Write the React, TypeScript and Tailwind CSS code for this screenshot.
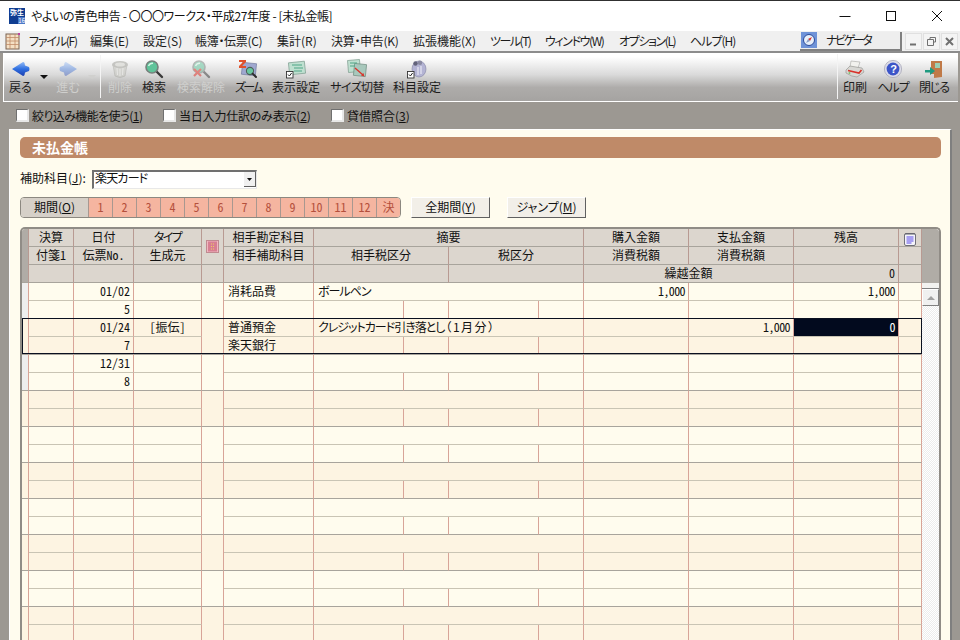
import React from 'react';

const gridCols = 'grid grid-cols-[7px_45px_60px_68px_22px_90px_90px_45px_90px_45px_105px_105px_105px_23px]';

const menus = [
  { label: 'ファイル(F)', w: 'w-[61px] tracking-[-1.2px]' },
  { label: '編集(E)', w: 'w-[53px]' },
  { label: '設定(S)', w: 'w-[52px]' },
  { label: '帳簿・伝票(C)', w: 'w-[82px] tracking-[-0.3px]' },
  { label: '集計(R)', w: 'w-[54px]' },
  { label: '決算・申告(K)', w: 'w-[82px] tracking-[-0.3px]' },
  { label: '拡張機能(X)', w: 'w-[77px]' },
  { label: 'ツール(T)', w: 'w-[55px] tracking-[-1.5px]' },
  { label: 'ウィンドウ(W)', w: 'w-[74px] tracking-[-1.4px]' },
  { label: 'オプション(L)', w: 'w-[71px] tracking-[-1.4px]' },
  { label: 'ヘルプ(H)', w: 'w-[70px] tracking-[-1px]' },
];

const ArrowIcon = ({ dir, pale }: { dir: 'l' | 'r'; pale?: boolean }) => (
  <svg width="20" height="20" viewBox="0 0 20 20" className={dir === 'r' ? '-scale-x-100' : ''} opacity={pale ? 0.38 : 1}>
    <defs>
      <linearGradient id="arrowBlue" x1="0" y1="0" x2="0" y2="1">
        <stop offset="0" stopColor="#8fb8f5" />
        <stop offset="0.5" stopColor="#2f6fe0" />
        <stop offset="1" stopColor="#1c3fb0" />
      </linearGradient>
    </defs>
    <path d="M1 10 L12 3 Q13 3 13.5 4 L14 6.5 L18 8 Q19 10 18 12 L14 13.5 L13.5 16 Q13 17 12 17 Z" fill="url(#arrowBlue)" />
  </svg>
);

const TrashIcon = () => (
  <svg width="20" height="20" viewBox="0 0 20 20" opacity="0.6">
    <path d="M3 6 L5 17 Q10 20 15 17 L17 6 Z" fill="#c9c9c3" stroke="#9a9a94" strokeWidth="0.6" />
    <ellipse cx="10" cy="5.5" rx="8" ry="3.6" fill="#a9a9a3" />
    <ellipse cx="10" cy="5.5" rx="5" ry="2" fill="#d8d8d2" />
    <path d="M7 9 L7.5 16 M10 10 L10 17 M13 9 L12.5 16" stroke="#eeeeea" strokeWidth="1" />
  </svg>
);

const LensIcon = ({ faded }: { faded?: boolean }) => (
  <svg width="20" height="20" viewBox="0 0 20 20" opacity={faded ? 0.5 : 1}>
    <path d="M12 12 L18 18" stroke="#3a3a3a" strokeWidth="2.4" strokeLinecap="round" />
    <circle cx="8" cy="8" r="6" fill="#5fc49a" stroke="#77807c" strokeWidth="1.6" />
    <path d="M4.5 7 Q6 4 9 4.2" stroke="#d8f5e6" strokeWidth="1.4" fill="none" />
    {faded && <path d="M3 10 L10 17 M10 10 L3 17" stroke="#e02a20" strokeWidth="2.2" />}
  </svg>
);

const ZoomIcon = () => (
  <svg width="20" height="20" viewBox="0 0 20 20">
    <rect x="4" y="4" width="14" height="12" fill="#9fa8d0" stroke="#6b7396" strokeWidth="0.6" transform="rotate(6 11 10)" />
    <path d="M1 1 H8 V3 L4 7 H8 V9 H1 V7 L5 3 H1 Z" fill="#e2502a" />
    <circle cx="12" cy="12" r="3.6" fill="#69c7a0" stroke="#50605a" strokeWidth="1.1" />
    <path d="M14.6 14.6 L18 18" stroke="#2e2e2e" strokeWidth="2" strokeLinecap="round" />
  </svg>
);

const CheckBadge = () => (
  <g>
    <rect x="0.5" y="12.5" width="6.5" height="6.5" fill="#fff" stroke="#333" strokeWidth="0.9" />
    <path d="M2 15.5 L3.4 17 L5.6 14" stroke="#222" strokeWidth="1" fill="none" />
  </g>
);

const DisplayIcon = () => (
  <svg width="20" height="20" viewBox="0 0 20 20">
    <rect x="3" y="3" width="16" height="12" fill="#bfe0d0" stroke="#7d9c8e" strokeWidth="0.7" transform="rotate(-6 11 9)" />
    <path d="M6 6 H16 M8 9 H17 M8 12 H16" stroke="#4fa586" strokeWidth="1.1" />
    <CheckBadge />
  </svg>
);

const SizeIcon = () => (
  <svg width="20" height="20" viewBox="0 0 20 20">
    <rect x="1" y="1" width="12" height="12" fill="#bfe0d0" stroke="#7d9c8e" strokeWidth="0.7" transform="rotate(-5 7 7)" />
    <rect x="7" y="5" width="12" height="12" fill="#a8c8bc" stroke="#6f8c80" strokeWidth="0.7" transform="rotate(6 13 11)" />
    <path d="M3 4 H10 M3 7 H8" stroke="#4fa586" strokeWidth="1" />
    <path d="M8 9 L16 16" stroke="#d8322a" strokeWidth="1.3" />
    <path d="M17.5 17.5 L14 16.4 L16.4 14 Z" fill="#d8322a" />
  </svg>
);

const AccountIcon = () => (
  <svg width="20" height="20" viewBox="0 0 20 20">
    <ellipse cx="12" cy="10" rx="7" ry="8" fill="#b4b4d4" stroke="#8484a4" strokeWidth="0.6" />
    <circle cx="8.5" cy="4.5" r="2.2" fill="#62627a" />
    <circle cx="13" cy="3.8" r="2.2" fill="#8a8aa2" />
    <path d="M11 8 V16 M14 7 V15" stroke="#e8e8f4" strokeWidth="1.2" />
    <CheckBadge />
  </svg>
);

const PrintIcon = () => (
  <svg width="20" height="20" viewBox="0 0 20 20">
    <path d="M6 2 L15 3 L13 9 L5 8 Z" fill="#f2f2ee" stroke="#a8a8a4" strokeWidth="0.6" />
    <path d="M1 11 L5 7 L17 9 L19 13 L12 18 Q7 18 1 14 Z" fill="#d8d8d4" stroke="#8e8e8a" strokeWidth="0.6" />
    <path d="M3 11.5 L14 14 L16.5 11" stroke="#d8322a" strokeWidth="1.6" fill="none" />
    <circle cx="4.5" cy="14" r="1" fill="#7fc46a" />
  </svg>
);

const HelpIcon = () => (
  <svg width="20" height="20" viewBox="0 0 20 20">
    <circle cx="10" cy="10" r="8.6" fill="#dcdce8" stroke="#a8a8b8" strokeWidth="0.8" />
    <circle cx="10" cy="10" r="6.4" fill="#3c55c8" />
    <text x="10" y="13.8" textAnchor="middle" fontSize="11" fontWeight="700" fill="#fff" fontFamily="Liberation Sans, sans-serif">?</text>
  </svg>
);

const DoorIcon = () => (
  <svg width="20" height="20" viewBox="0 0 20 20">
    <path d="M7 2 H18 V18 L10 19 V15 H7 Z" fill="#c07a48" />
    <path d="M11 4 H16 V9 H11 Z" fill="#9cd0b4" />
    <path d="M1 11 H6 V8 L11 12 L6 16 V13.5 H1 Z" fill="#1f9a80" />
  </svg>
);

const tools = [
  { label: '戻る', w: 'w-[33px]', icon: <ArrowIcon dir="l" /> },
  { caret: 'dark' },
  { label: '進む', w: 'w-[34px]', icon: <ArrowIcon dir="r" pale />, off: true },
  { caret: 'pale' },
  { sep: true },
  { label: '削除', w: 'w-[36px]', icon: <TrashIcon />, off: true },
  { label: '検索', w: 'w-[32px]', icon: <LensIcon /> },
  { label: '検索解除', w: 'w-[62px]', icon: <LensIcon faded />, off: true },
  { label: 'ズーム', w: 'w-[32px] tracking-[-2.5px]', icon: <ZoomIcon /> },
  { label: '表示設定', w: 'w-[64px]', icon: <DisplayIcon /> },
  { label: 'サイズ切替', w: 'w-[58px] tracking-[-0.6px]', icon: <SizeIcon /> },
  { label: '科目設定', w: 'w-[62px]', icon: <AccountIcon /> },
];

const rightTools = [
  { label: '印刷', w: 'w-[32px]', icon: <PrintIcon /> },
  { label: 'ヘルプ', w: 'w-[44px] tracking-[-1px]', icon: <HelpIcon /> },
  { label: '閉じる', w: 'w-[38px] tracking-[-1px]', icon: <DoorIcon /> },
];

const ToolButton = ({ label, w, icon, off }: any) => (
  <div className={`${w} flex flex-col items-center shrink-0`}>
    <div className="h-5 mt-[6px] flex items-center justify-center">{icon}</div>
    <span className={`h-[14px] mt-[1px] leading-[14px] whitespace-nowrap ${off ? 'text-[#cfcfcd]' : 'text-[#1c1c1c]'}`}>{label}</span>
  </div>
);

const TitleBar = () => (
  <div className="h-[31px] shrink-0 bg-white border-t border-[#303030] flex items-center">
    <div className="ml-[9px] w-4 h-4 bg-[#0f3d91] flex flex-col items-center justify-between text-white leading-none">
      <span className="text-[7px] leading-[8px] font-bold">弥生</span>
      <span className="text-[6px] leading-[7px] self-end bg-[#4a78c8]">16</span>
    </div>
    <span className="ml-[6px] flex-1 text-[#111] tracking-[-0.4px]">やよいの青色申告 - 〇〇〇ワークス・平成27年度 - [未払金帳]</span>
    <div className="w-[46px] flex justify-center">
      <svg width="12" height="12" viewBox="0 0 12 12"><path d="M0.5 6.5 H11.5" stroke="#111" /></svg>
    </div>
    <div className="w-[46px] flex justify-center">
      <svg width="12" height="12" viewBox="0 0 12 12"><rect x="1.5" y="1.5" width="9" height="9" fill="none" stroke="#111" /></svg>
    </div>
    <div className="w-[46px] flex justify-center">
      <svg width="12" height="12" viewBox="0 0 12 12"><path d="M1 1 L11 11 M11 1 L1 11" stroke="#111" /></svg>
    </div>
  </div>
);

const MdiButton = ({ children }: { children: React.ReactNode }) => (
  <div className="w-[17px] h-[17px] border border-[#e0e0e0] bg-[#f4f4f4] flex items-center justify-center">{children}</div>
);

const MenuBar = () => (
  <div className="h-5 shrink-0 bg-[#f0f0f0] flex items-center text-[#1c1c1c]">
    <svg width="16" height="17" viewBox="0 0 16 17" className="ml-[5px] mr-[8px] shrink-0">
      <rect x="1" y="1" width="13" height="15" fill="#f4dfc4" stroke="#7a6250" />
      <path d="M1 4.5 H14 M1 8 H14 M1 11.5 H14 M5 1 V16 M10 1 V16" stroke="#c08a68" strokeWidth="0.8" />
      <rect x="13" y="0" width="2" height="2" fill="#c040a0" />
    </svg>
    {menus.map(m => (
      <span key={m.label} className={`${m.w} shrink-0 whitespace-nowrap`}>{m.label}</span>
    ))}
    <div className="ml-auto flex items-center gap-[1px] pr-[2px] h-full">
      <div className="w-[102px] h-[19px] mr-[2px] bg-[#eeeeee] border-r-2 border-b-2 border-[#808080] flex items-center">
        <div className="w-4 h-4 ml-[1px] bg-[#6f93d8] flex items-center justify-center">
          <svg width="14" height="14" viewBox="0 0 14 14">
            <circle cx="7" cy="7" r="5.5" fill="#e8f0fa" stroke="#2a4a9a" />
            <path d="M10 4 L6 6 L8 8 Z" fill="#d8322a" />
            <path d="M4 10 L6 6 L8 8 Z" fill="#8aa0c8" />
          </svg>
        </div>
        <span className="ml-[9px] tracking-[-2.4px]">ナビゲータ</span>
      </div>
      <MdiButton><svg width="9" height="9" viewBox="0 0 9 9"><path d="M1 7.5 H7" stroke="#707070" strokeWidth="2" /></svg></MdiButton>
      <MdiButton><svg width="9" height="9" viewBox="0 0 9 9"><path d="M3 2 V0.5 H8.5 V5 H6.5 M0.5 2.5 H6.5 V8.5 H0.5 Z" fill="none" stroke="#707070" /></svg></MdiButton>
      <MdiButton><svg width="9" height="9" viewBox="0 0 9 9"><path d="M1 1 L8 8 M8 1 L1 8" stroke="#707070" strokeWidth="2" /></svg></MdiButton>
    </div>
  </div>
);

const Toolbar = () => (
  <div className="shrink-0 h-[51px] bg-[#9c9892] border-t-2 border-[#8c8c8c] pl-[3px] pr-[2px]">
    <div className="h-[49px] bg-[linear-gradient(#ffffff_8%,#dadada_45%,#aeacaa_72%,#a5a3a1)] border-l border-white border-b flex justify-between">
      <div className="flex">
        {tools.map((t: any, i) =>
          t.sep ? (
            <div key={i} className="w-[1px] h-[43px] mt-[2px] mx-[1px] bg-[#f4f4f4] shrink-0" />
          ) : t.caret ? (
            <div key={i} className="w-[14px] shrink-0 pt-[22px] flex justify-center">
              <svg width="8" height="4" viewBox="0 0 8 4"><path d="M0 0 H8 L4 4 Z" fill={t.caret === 'dark' ? '#111' : '#d0d0ce'} /></svg>
            </div>
          ) : (
            <ToolButton key={t.label} {...t} />
          )
        )}
      </div>
      <div className="flex">
        <div className="w-[1px] h-[45px] mt-[1px] mr-[1px] bg-[#f4f4f4]" />
        {rightTools.map(t => (
          <ToolButton key={t.label} {...t} />
        ))}
        <div className="w-[5px]" />
      </div>
    </div>
  </div>
);

const Check = ({ label, w }: { label: React.ReactNode; w: string }) => (
  <label className={`${w} flex items-center shrink-0`}>
    <span className="w-[13px] h-[13px] bg-white border-t border-l border-[#707070] border-b-2 border-r-2 border-b-[#e8e8e8] border-r-[#e8e8e8]" />
    <span className="ml-[3px] text-[#111] whitespace-nowrap">{label}</span>
  </label>
);

const Filters = () => (
  <div className="h-[27px] shrink-0 bg-[#9c9892] pl-4 flex items-center">
    <Check w="w-[147px] tracking-[-0.6px]" label={<>絞り込み機能を使う(<u>1</u>)</>} />
    <Check w="w-[168px] tracking-[-0.2px]" label={<>当日入力仕訳のみ表示(<u>2</u>)</>} />
    <Check w="w-[100px]" label={<>貸借照合(<u>3</u>)</>} />
  </div>
);

const months = ['1', '2', '3', '4', '5', '6', '7', '8', '9', '10', '11', '12', '決'];

const PeriodRow = () => (
  <div className="mt-2 h-[21px] flex items-center">
    <div className="w-[381px] h-full flex rounded-[4px] border border-[#8c8880] overflow-hidden shrink-0">
      <div className="w-[67px] pb-[1px] bg-[#d6d0c8] flex items-center justify-center text-[#111]">期間(<u>O</u>)</div>
      {months.map(m => (
        <div key={m} className="w-6 pb-[1px] bg-[#f5b5a0] border-l border-[#a89890] flex items-center justify-center text-[#b4503c] [font-feature-settings:'hwid']">{m}</div>
      ))}
    </div>
    <div className="ml-[10px] w-[79px] h-full pb-[1px] bg-[#f2efe8] border border-t-white border-l-white border-b-[#606060] border-r-[#606060] flex items-center justify-center text-[#111]">全期間(<u>Y</u>)</div>
    <div className="ml-[17px] w-[79px] h-full pb-[1px] bg-[#f2efe8] border border-t-white border-l-white border-b-[#606060] border-r-[#606060] flex items-center justify-center text-[#111]">ジャンプ(<u>M</u>)</div>
  </div>
);

const Combo = () => (
  <div className="mt-3 h-[19px] flex items-center">
    <span className="w-[72px] pb-[3px] text-[#111]">補助科目(<u>J</u>):</span>
    <div className="w-[165px] h-full bg-white border-t-2 border-l-2 border-[#707070] border-r border-b border-r-[#e8e8e8] border-b-[#e8e8e8] flex">
      <span className="flex-1 pl-[1px] text-[#111] leading-[12px] tracking-[-0.8px]">楽天カード</span>
      <div className="w-3 h-[15px] bg-[#f0f0f0] border-r border-b border-[#606060] flex items-center justify-center">
        <svg width="5" height="3" viewBox="0 0 5 3"><path d="M0 0 H5 L2.5 3 Z" fill="#111" /></svg>
      </div>
    </div>
  </div>
);

const BookIcon = () => (
  <svg width="13" height="13" viewBox="0 0 13 13">
    <rect x="0.5" y="0.5" width="12" height="12" fill="#f0b8c0" stroke="#c08a90" />
    <rect x="2" y="1.5" width="9" height="10" fill="#d87f92" />
    <path d="M5 4 H9 M5 6.5 H9 M5 9 H9" stroke="#f0d060" strokeDasharray="1 1" />
  </svg>
);

const NoteIcon = () => (
  <svg width="12" height="14" viewBox="0 0 12 14" className="mt-[3px]">
    <rect x="0.5" y="1.5" width="11" height="12" rx="1.5" fill="#f4f4fa" stroke="#707078" />
    <path d="M2 1 V3 M4 1 V3 M6 1 V3 M8 1 V3 M10 1 V3" stroke="#606068" />
    <path d="M2.5 5 H9.5 M2.5 7 H9.5 M2.5 9 H9.5 M2.5 11 H7.5" stroke="#5a4ae8" strokeWidth="1.2" />
  </svg>
);

const Hd = ({ children, className = '' }: { children?: React.ReactNode; className?: string }) => (
  <div className={`h-[18px] pb-[1px] border-r border-b border-r-[#b89a92] border-b-[#a8a49c] flex items-center justify-center text-[#111] leading-none ${className}`}>{children}</div>
);

const HeaderRows = () => (
  <div className={`${gridCols} bg-[#dcd6ce]`}>
    <div className="row-span-3 border-r border-b border-r-[#b89a92] border-b-[#a8a49c] bg-[#b0aca6]" />
    <Hd>決算</Hd>
    <Hd>日付</Hd>
    <Hd className="[font-feature-settings:'palt'] tracking-[-1.5px]">タイプ</Hd>
    <div className="row-span-2 border-r border-b border-r-[#b89a92] border-b-[#a8a49c] flex items-center justify-center"><BookIcon /></div>
    <Hd>相手勘定科目</Hd>
    <Hd className="col-span-4">摘要</Hd>
    <Hd>購入金額</Hd>
    <Hd>支払金額</Hd>
    <Hd>残高</Hd>
    <Hd><NoteIcon /></Hd>
    <Hd>付箋1</Hd>
    <Hd>伝票No.</Hd>
    <Hd>生成元</Hd>
    <Hd>相手補助科目</Hd>
    <Hd className="col-span-2">相手税区分</Hd>
    <Hd className="col-span-2">税区分</Hd>
    <Hd>消費税額</Hd>
    <Hd>消費税額</Hd>
    <Hd />
    <Hd />
    <Hd />
    <Hd />
    <Hd />
    <Hd />
    <Hd />
    <Hd className="col-span-2" />
    <Hd className="col-span-2" />
    <Hd className="col-span-2">繰越金額</Hd>
    <Hd className="justify-end pr-[3px]">0</Hd>
    <Hd />
  </div>
);

type Rec = {
  date?: string;
  no?: string;
  type?: string;
  acct?: string;
  sub?: string;
  memo?: React.ReactNode;
  buy?: string;
  pay?: string;
  bal?: string;
  selected?: boolean;
};

const records: Rec[] = [
  { date: '01/02', no: '5', acct: '消耗品費', memo: 'ボールペン', buy: '1,000', bal: '1,000' },
  {
    date: '01/24',
    no: '7',
    type: '[振伝]',
    acct: '普通預金',
    sub: '楽天銀行',
    memo: <>クレジットカード引き落とし<span className="tracking-[1.5px] ml-[1px]">（1月分）</span></>,
    pay: '1,000',
    bal: '0',
    selected: true,
  },
  { date: '12/31', no: '8' },
  {},
  {},
  {},
  {},
  {},
  {},
  {},
];

const Cell = ({ children, className = '', end }: { children?: React.ReactNode; className?: string; end?: boolean }) => (
  <div className={`h-[18px] pb-[1px] border-r border-r-[#d8a498] flex items-center whitespace-nowrap text-[#111] leading-none ${end ? 'border-b border-b-[#a8a49c]' : 'border-b border-b-[#c9c4b4]'} ${className}`}>{children}</div>
);

const Record = ({ r, i }: { r: Rec; i: number }) => {
  const tint = i % 2 === 1;
  const num = 'justify-end pr-[3px]';
  const amt = 'justify-end pr-[3px] tracking-[-0.6px]';
  const txt = 'pl-[4px]';
  return (
    <div className={`${gridCols} ${tint ? 'bg-[#fdf4e2]' : 'bg-[#fffcee]'}`}>
      <div className={`row-span-2 border-r border-b border-r-[#d8a498] border-b-[#a8a49c] ${i === 0 || i === 2 ? 'bg-[#eeeeee]' : ''}`} />
      <Cell />
      <Cell className={num}>{r.date}</Cell>
      <Cell className="justify-center">{r.type}</Cell>
      <div className="row-span-2 border-r border-b border-r-[#d8a498] border-b-[#a8a49c]" />
      <Cell className={txt}>{r.acct}</Cell>
      <Cell className={`col-span-4 ${txt} [font-feature-settings:'palt'] tracking-[-1px]`}>{r.memo}</Cell>
      <Cell className={amt}>{r.buy}</Cell>
      <Cell className={amt}>{r.pay}</Cell>
      <Cell className={`${amt} ${r.selected ? 'bg-[#020a1e] text-white' : ''}`}>{r.bal}</Cell>
      <Cell />
      <Cell end />
      <Cell end className={num}>{r.no}</Cell>
      <Cell end />
      <Cell end className={txt}>{r.sub}</Cell>
      <Cell end />
      <Cell end />
      <Cell end />
      <Cell end />
      <Cell end />
      <Cell end />
      <Cell end />
      <Cell end />
    </div>
  );
};

const ScrollBar = () => (
  <div className="w-[17px] shrink-0 flex flex-col bg-[repeating-conic-gradient(#ffffff_0%_25%,#ececec_0%_50%)] bg-[length:2px_2px]">
    <div className="h-[54px] bg-[#b0aca6] shrink-0" />
    <div className="h-[6px] bg-[#f2f2f0] border-b border-[#808080] shrink-0" />
    <div className="h-[17px] bg-[#f0f0f0] border border-white border-r-[#808080] border-b-[#808080] flex items-center justify-center shrink-0">
      <svg width="8" height="4" viewBox="0 0 8 4"><path d="M4 0 L8 4 H0 Z" fill="#a0a0a0" /></svg>
    </div>
  </div>
);

const Ledger = () => (
  <div className="mt-[9px] flex-1 min-h-0 flex border-t-2 border-x-2 border-[#908c86] rounded-t-[5px] overflow-hidden [font-feature-settings:'hwid']">
    <div className="w-[900px] shrink-0 relative">
      <HeaderRows />
      {records.map((r, i) => (
        <Record key={i} r={r} i={i} />
      ))}
      <div className="absolute left-0 right-0 top-[89px] h-[36px] border border-[#0a1020] pointer-events-none" />
    </div>
    <ScrollBar />
  </div>
);

export default function App() {
  return (
    <div className="w-[960px] h-[640px] overflow-hidden flex flex-col bg-[#9c9892] text-[12px] font-['Noto_Sans_CJK_JP','Liberation_Sans',sans-serif] [font-feature-settings:'palt']">
      <TitleBar />
      <MenuBar />
      <Toolbar />
      <Filters />
      <div className="flex-1 min-h-0 ml-[9px] mr-[8px] bg-[#fffcee] border-l border-t border-white border-r-2 border-r-[#7f7f7f] pl-[10px] pr-[9px] pt-[7px] flex flex-col">
        <div className="h-[21px] shrink-0 rounded-[5px] bg-[#bf8a68] pl-3 flex items-center text-white font-bold text-[14px]">未払金帳</div>
        <Combo />
        <PeriodRow />
        <Ledger />
      </div>
    </div>
  );
}
